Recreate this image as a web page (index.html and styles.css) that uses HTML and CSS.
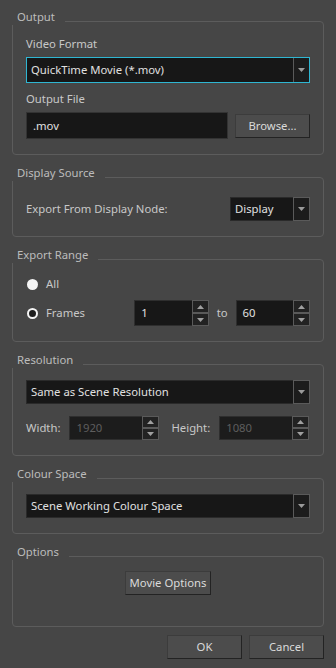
FILE: index.html
```html
<!DOCTYPE html>
<html>
<head>
<meta charset="utf-8">
<link rel="stylesheet" href="styles.css">
</head>
<body>
<div class="dialog">
  <section class="group g-output">
    <div class="title">Output</div>
    <div class="label l-first">Video Format</div>
    <div class="combo focus">
      <span class="combo-text">QuickTime Movie (*.mov)</span>
      <span class="combo-btn"><svg width="7" height="4" viewBox="0 0 7 4"><path d="M0 0H7L3.5 4Z" fill="#9a9a9a"/></svg></span>
    </div>
    <div class="label l-second">Output File</div>
    <div class="file-row">
      <div class="field file-field">.mov</div>
      <button class="btn browse">Browse...</button>
    </div>
  </section>

  <section class="group g-display">
    <div class="title">Display Source</div>
    <div class="display-row">
      <span class="row-label">Export From Display Node:</span>
      <div class="combo display-combo">
        <span class="combo-text">Display</span>
        <span class="combo-btn"><svg width="7" height="4" viewBox="0 0 7 4"><path d="M0 0H7L3.5 4Z" fill="#9a9a9a"/></svg></span>
      </div>
    </div>
  </section>

  <section class="group g-range">
    <div class="title">Export Range</div>
    <div class="radio-row r-all">
      <span class="radio filled"></span>
      <span class="radio-label">All</span>
    </div>
    <div class="radio-row r-frames">
      <span class="radio ring"></span>
      <span class="radio-label frames-label">Frames</span>
      <div class="spin frame-spin">
        <span class="spin-text">1</span>
        <span class="spin-btns">
          <span class="sb"><svg width="7" height="4" viewBox="0 0 7 4"><path d="M0 4H7L3.5 0Z" fill="#a0a0a0"/></svg></span>
          <span class="sb"><svg width="7" height="4" viewBox="0 0 7 4"><path d="M0 0H7L3.5 4Z" fill="#a0a0a0"/></svg></span>
        </span>
      </div>
      <span class="to-label">to</span>
      <div class="spin frame-spin">
        <span class="spin-text">60</span>
        <span class="spin-btns">
          <span class="sb"><svg width="7" height="4" viewBox="0 0 7 4"><path d="M0 4H7L3.5 0Z" fill="#a0a0a0"/></svg></span>
          <span class="sb"><svg width="7" height="4" viewBox="0 0 7 4"><path d="M0 0H7L3.5 4Z" fill="#a0a0a0"/></svg></span>
        </span>
      </div>
    </div>
  </section>

  <section class="group g-res">
    <div class="title">Resolution</div>
    <div class="combo res-combo">
      <span class="combo-text">Same as Scene Resolution</span>
      <span class="combo-btn"><svg width="7" height="4" viewBox="0 0 7 4"><path d="M0 0H7L3.5 4Z" fill="#9a9a9a"/></svg></span>
    </div>
    <div class="size-row">
      <span class="row-label">Width:</span>
      <div class="spin size-spin disabled">
        <span class="spin-text">1920</span>
        <span class="spin-btns">
          <span class="sb"><svg width="7" height="4" viewBox="0 0 7 4"><path d="M0 4H7L3.5 0Z" fill="#a0a0a0"/></svg></span>
          <span class="sb"><svg width="7" height="4" viewBox="0 0 7 4"><path d="M0 0H7L3.5 4Z" fill="#a0a0a0"/></svg></span>
        </span>
      </div>
      <span class="row-label height-label">Height:</span>
      <div class="spin size-spin disabled">
        <span class="spin-text">1080</span>
        <span class="spin-btns">
          <span class="sb"><svg width="7" height="4" viewBox="0 0 7 4"><path d="M0 4H7L3.5 0Z" fill="#a0a0a0"/></svg></span>
          <span class="sb"><svg width="7" height="4" viewBox="0 0 7 4"><path d="M0 0H7L3.5 4Z" fill="#a0a0a0"/></svg></span>
        </span>
      </div>
    </div>
  </section>

  <section class="group g-colour">
    <div class="title">Colour Space</div>
    <div class="combo colour-combo">
      <span class="combo-text">Scene Working Colour Space</span>
      <span class="combo-btn"><svg width="7" height="4" viewBox="0 0 7 4"><path d="M0 0H7L3.5 4Z" fill="#9a9a9a"/></svg></span>
    </div>
  </section>

  <section class="group g-options">
    <div class="title">Options</div>
    <div class="options-row">
      <button class="btn movie-btn">Movie Options</button>
    </div>
  </section>

  <div class="footer">
    <button class="btn foot-btn">OK</button>
    <button class="btn foot-btn">Cancel</button>
  </div>
</div>
</body>
</html>
```
FILE: styles.css
```css
* { box-sizing: border-box; }
html, body { margin: 0; padding: 0; }
body {
  background: #464646;
  font-family: "Noto Sans", "Open Sans", sans-serif;
  font-size: 11.3px;
  line-height: 16px;
  color: #c8c8c8;
  width: 336px;
  height: 668px;
  overflow: hidden;
}
.dialog {
  padding: 21px 12px 0 12px;
  display: flex;
  flex-direction: column;
}
.group {
  border: 1px solid #5c5c5c;
  border-radius: 4px;
  padding: 0 13px 15px 13px;
  display: flex;
  flex-direction: column;
}
.group + .group { margin-top: 22px; }
.title {
  margin: -13px 0 0 -14px;
  align-self: flex-start;
  background: #464646;
  padding: 0 10px 0 5px;
  height: 16px;
  color: #bcbcbc;
}
.label { height: 16px; }
.l-first { margin-top: 11px; }
.l-second { margin-top: 8px; }

.combo {
  display: flex;
  height: 24px;
  border: 1px solid #2a2a2a;
  background: #171717;
  color: #e0e0e0;
}
.combo.focus { border-color: #2fb6d2; margin-top: 5px; height: 26px; }
.combo-text {
  flex: 1;
  padding-left: 4px;
  line-height: 22px;
  white-space: nowrap;
  overflow: hidden;
}
.combo.focus .combo-text { line-height: 24px; }
.combo-btn {
  width: 17px;
  margin: -1px -1px -1px 0;
  border: 1px solid #5a5a5a;
  background: #1c1c1c;
  display: flex;
  align-items: center;
  justify-content: center;
}
.combo.focus .combo-btn {
  margin: 0;
  width: 16px;
  border: 0;
  border-left: 1px solid #5a5a5a;
}

.file-row {
  display: flex;
  align-items: center;
  gap: 7px;
  margin-top: 5px;
}
.field {
  height: 27px;
  border: 1px solid #333;
  background: #171717;
  color: #e0e0e0;
  padding-left: 6px;
  line-height: 25px;
}
.file-field { flex: 1; }

.btn {
  font: inherit;
  color: #dadada;
  background: #4c4c4c;
  border: 1px solid #3c3c3c;
  border-right-color: #232323;
  border-bottom-color: #232323;
  padding: 0;
  height: 24px;
  line-height: 20px;
  cursor: default;
}
.browse { width: 75px; }

.display-row {
  display: flex;
  align-items: center;
  justify-content: space-between;
  margin-top: 16px;
}
.display-combo { width: 80px; }

.radio-row { display: flex; align-items: center; }
.r-all { margin-top: 13px; height: 16px; }
.r-frames { margin-top: 8px; height: 26px; }
.radio {
  width: 11px;
  height: 11px;
  border-radius: 50%;
  margin-left: 1px;
  flex: none;
}
.radio.filled { background: #f4f4f4; }
.radio.ring { border: 2px solid #f4f4f4; background: #1e1e1e; }
.radio-label { margin-left: 8px; }
.frames-label { width: 89px; }
.to-label { width: 27px; text-align: center; }

.spin {
  display: flex;
  height: 26px;
  border: 1px solid #2e2e2e;
  background: #171717;
  color: #e0e0e0;
}
.spin-text {
  flex: 1;
  padding-left: 6px;
  line-height: 24px;
}
.spin-btns {
  width: 17px;
  margin: -1px -1px -1px 0;
  display: flex;
  flex-direction: column;
}
.sb {
  flex: 1;
  border: 1px solid #5a5a5a;
  background: #222;
  display: flex;
  align-items: center;
  justify-content: center;
}
.frame-spin { width: 75px; }

.res-combo { margin-top: 12px; }
.size-row {
  display: flex;
  align-items: center;
  margin-top: 12px;
}
.size-spin { width: 90px; height: 24px; margin-left: 9px; }
.size-spin .spin-text { line-height: 22px; }
.spin.disabled { background: #1c1c1c; }
.spin.disabled .spin-text { color: #5e5e5e; }
.height-label { margin-left: 12px; }

.colour-combo { margin-top: 12px; }

.options-row {
  display: flex;
  justify-content: center;
  margin-top: 11px;
  padding-bottom: 16px;
}
.movie-btn { width: 86px; }

.footer {
  display: flex;
  justify-content: flex-end;
  gap: 7px;
  margin-top: 8px;
}
.foot-btn { width: 75px; }
```
